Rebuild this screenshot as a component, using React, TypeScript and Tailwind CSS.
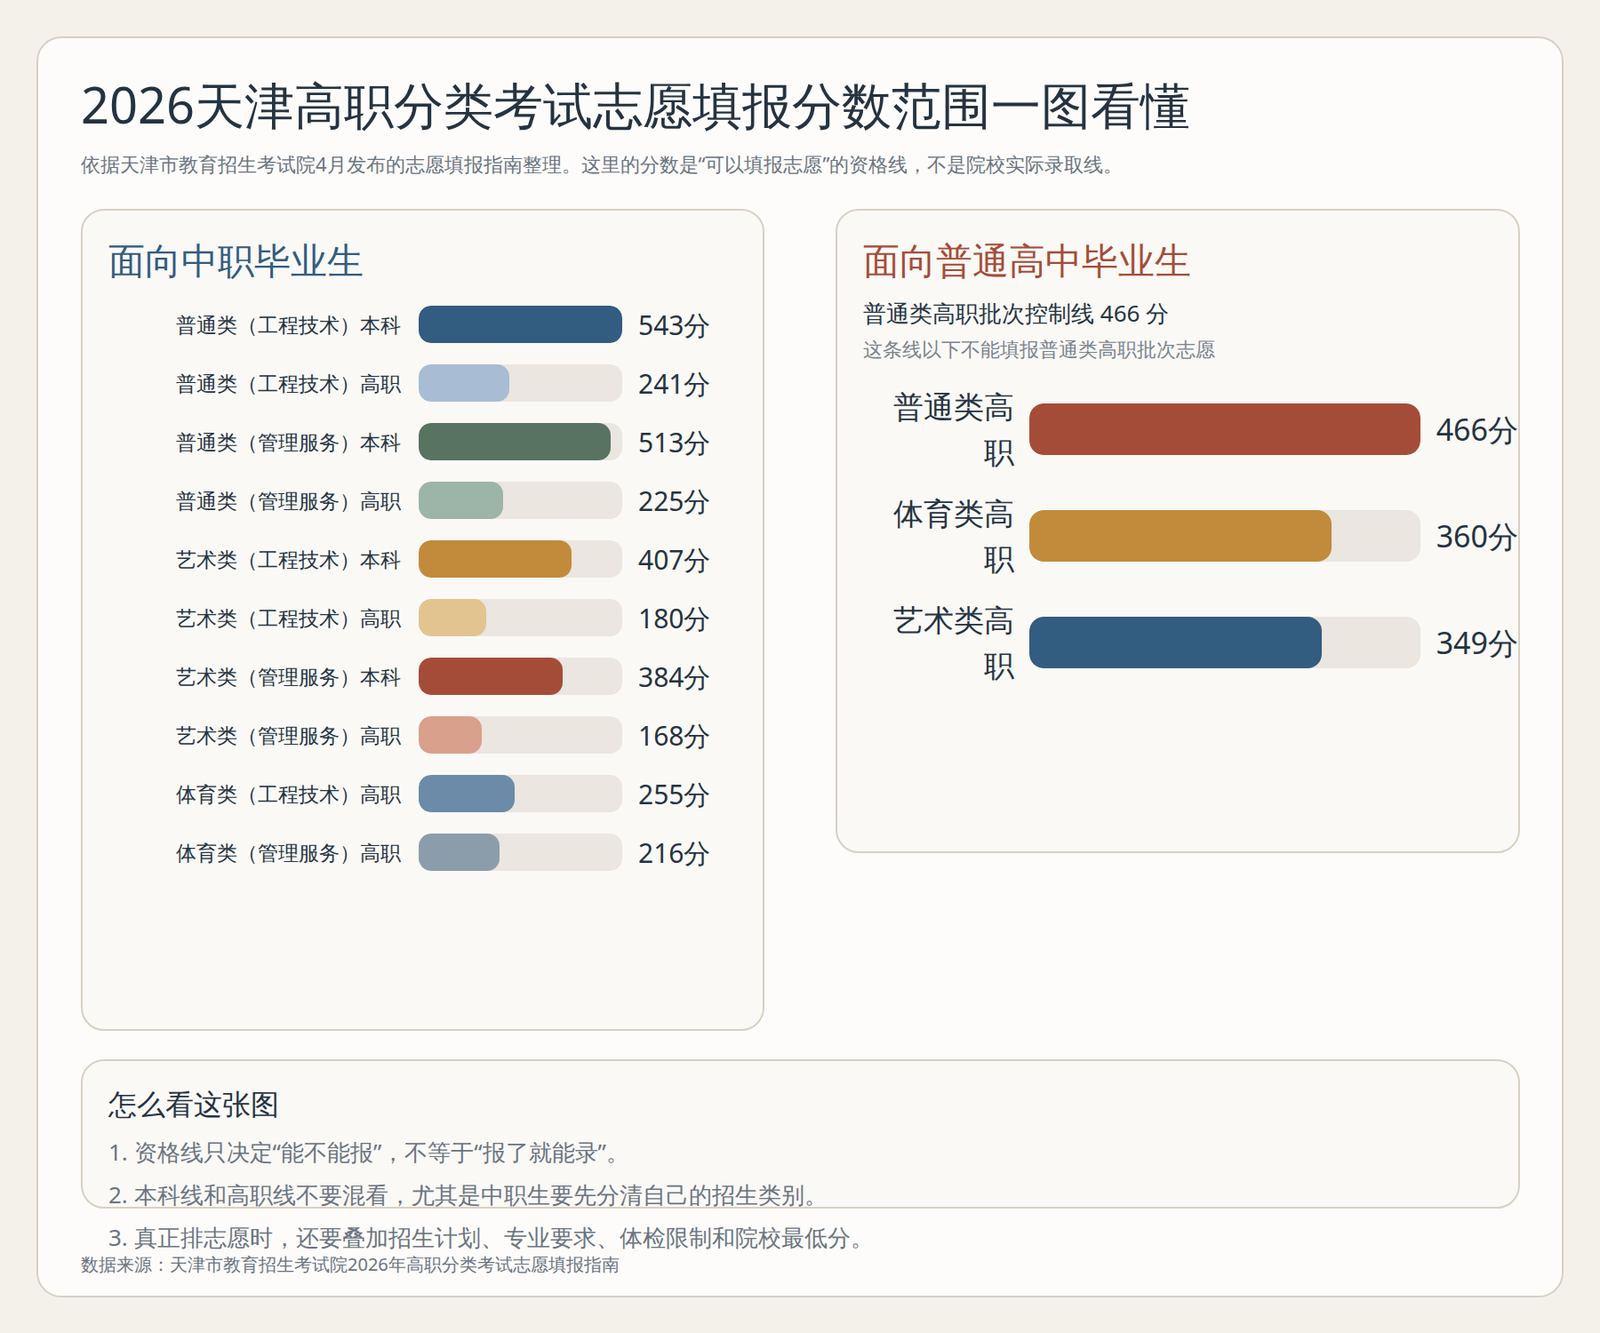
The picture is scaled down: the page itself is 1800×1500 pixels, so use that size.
const FONT = "font-['Noto_Sans_CJK_SC','Noto_Sans',sans-serif]";

const vocational = [
  { label: '普通类（工程技术）本科', score: 543, color: 'bg-[#325c80]' },
  { label: '普通类（工程技术）高职', score: 241, color: 'bg-[#a8bcd4]' },
  { label: '普通类（管理服务）本科', score: 513, color: 'bg-[#58735f]' },
  { label: '普通类（管理服务）高职', score: 225, color: 'bg-[#9cb5a8]' },
  { label: '艺术类（工程技术）本科', score: 407, color: 'bg-[#c28b3b]' },
  { label: '艺术类（工程技术）高职', score: 180, color: 'bg-[#e2c490]' },
  { label: '艺术类（管理服务）本科', score: 384, color: 'bg-[#a54c38]' },
  { label: '艺术类（管理服务）高职', score: 168, color: 'bg-[#d9a08c]' },
  { label: '体育类（工程技术）高职', score: 255, color: 'bg-[#6c8ba8]' },
  { label: '体育类（管理服务）高职', score: 216, color: 'bg-[#8b9dab]' },
];

const general = [
  { label: '普通类高职', score: 466, color: 'bg-[#a54c38]' },
  { label: '体育类高职', score: 360, color: 'bg-[#c28b3b]' },
  { label: '艺术类高职', score: 349, color: 'bg-[#325c80]' },
];

export default function App() {
  return (
    <div className={`min-h-[1500px] w-[1800px] bg-[#f4f0ea] pt-[41px] ${FONT}`}>
      <div className="ml-[41px] h-[1419px] w-[1718px] rounded-[28px] border-2 border-[#d8d0c2] bg-[#fdfcfa] pl-[48px] pr-[47px] pt-[41px] text-[#253341]">
        {/* Header */}
        <h1 className="text-[56px] leading-[67px] font-normal">2026天津高职分类考试志愿填报分数范围一图看懂</h1>
        <p className="mt-[18px] text-[22px] leading-[30px] text-[#6b7480]">
          依据天津市教育招生考试院4月发布的志愿填报指南整理。这里的分数是“可以填报志愿”的资格线，不是院校实际录取线。
        </p>

        {/* Panels */}
        <div className="mt-[36px] flex gap-[80px]">
          <div className="h-[925px] w-[769px] rounded-[26px] border-2 border-[#d8d0c2] bg-[#faf9f6] pl-[29px] pt-[30px]">
            <h2 className="text-[41px] leading-[50px] text-[#325c80]">面向中职毕业生</h2>
            <div className="mt-[15px]">
              {vocational.map((r) => (
                <div key={r.label} className="flex h-[66px] items-center">
                  <span className="w-[329px] text-right text-[23px]">{r.label}</span>
                  <div className="ml-[20px] h-[42px] w-[229px] overflow-hidden rounded-[14px] bg-[#ebe6df]">
                    <div className={`h-full rounded-[14px] ${r.color}`} style={{ width: `${(r.score / 543) * 100}%` }} />
                  </div>
                  <span className="ml-[18px] text-[30px]">{r.score}分</span>
                </div>
              ))}
            </div>
          </div>

          <div className="h-[725px] w-[770px] rounded-[26px] border-2 border-[#d8d0c2] bg-[#faf9f6] pl-[29px] pt-[30px]">
            <h2 className="text-[41px] leading-[50px] text-[#a54c38]">面向普通高中毕业生</h2>
            <p className="mt-[18px] text-[26px] leading-[34px]">普通类高职批次控制线 466 分</p>
            <p className="mt-[8px] text-[22px] leading-[30px] text-[#7a838d]">这条线以下不能填报普通类高职批次志愿</p>
            <div className="mt-[16px]">
              {general.map((r) => (
                <div key={r.label} className="flex h-[120px] items-center">
                  <span className="w-[192px] text-right text-[34px]">{r.label}</span>
                  <div className="ml-[17px] h-[58px] w-[440px] shrink-0 overflow-hidden rounded-[16px] bg-[#ebe6df]">
                    <div className={`h-full rounded-[16px] ${r.color}`} style={{ width: `${(r.score / 466) * 100}%` }} />
                  </div>
                  <span className="ml-[18px] whitespace-nowrap text-[34px]">{r.score}分</span>
                </div>
              ))}
            </div>
          </div>
        </div>

        {/* How to read */}
        <div className="mt-[32px] h-[168px] w-[1619px] rounded-[26px] border-2 border-[#d8d0c2] bg-[#faf9f6] pl-[29px] pt-[28px]">
          <h3 className="text-[32px] leading-[40px]">怎么看这张图</h3>
          <div className="mt-[10px] text-[26px] leading-[48px] text-[#6b7480]">
            <p>1. 资格线只决定“能不能报”，不等于“报了就能录”。</p>
            <p>2. 本科线和高职线不要混看，尤其是中职生要先分清自己的招生类别。</p>
            <p>3. 真正排志愿时，还要叠加招生计划、专业要求、体检限制和院校最低分。</p>
          </div>
        </div>
        <p className="mt-[49px] text-[20px] leading-[28px] text-[#6b7480]">数据来源：天津市教育招生考试院2026年高职分类考试志愿填报指南</p>
      </div>
    </div>
  );
}
